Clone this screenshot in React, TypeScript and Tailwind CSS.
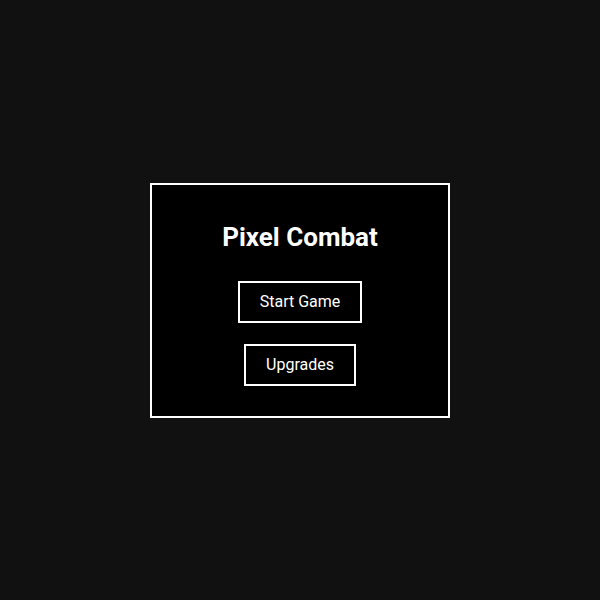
const App = () => {
  return (
    <div className="min-h-screen w-full bg-[#111111] flex items-center justify-center font-['Roboto',sans-serif] text-white">
      <div className="w-[300px] bg-black border-2 border-white flex flex-col items-center pt-[34px] pb-[30px]">
        <h1 className="text-[26px] leading-9 font-bold">Pixel Combat</h1>
        <button className="mt-[26px] border-2 border-white px-5 py-[7px] text-base leading-6">Start Game</button>
        <button className="mt-[21px] border-2 border-white px-5 py-[7px] text-base leading-6">Upgrades</button>
      </div>
    </div>
  )
}

export default App
